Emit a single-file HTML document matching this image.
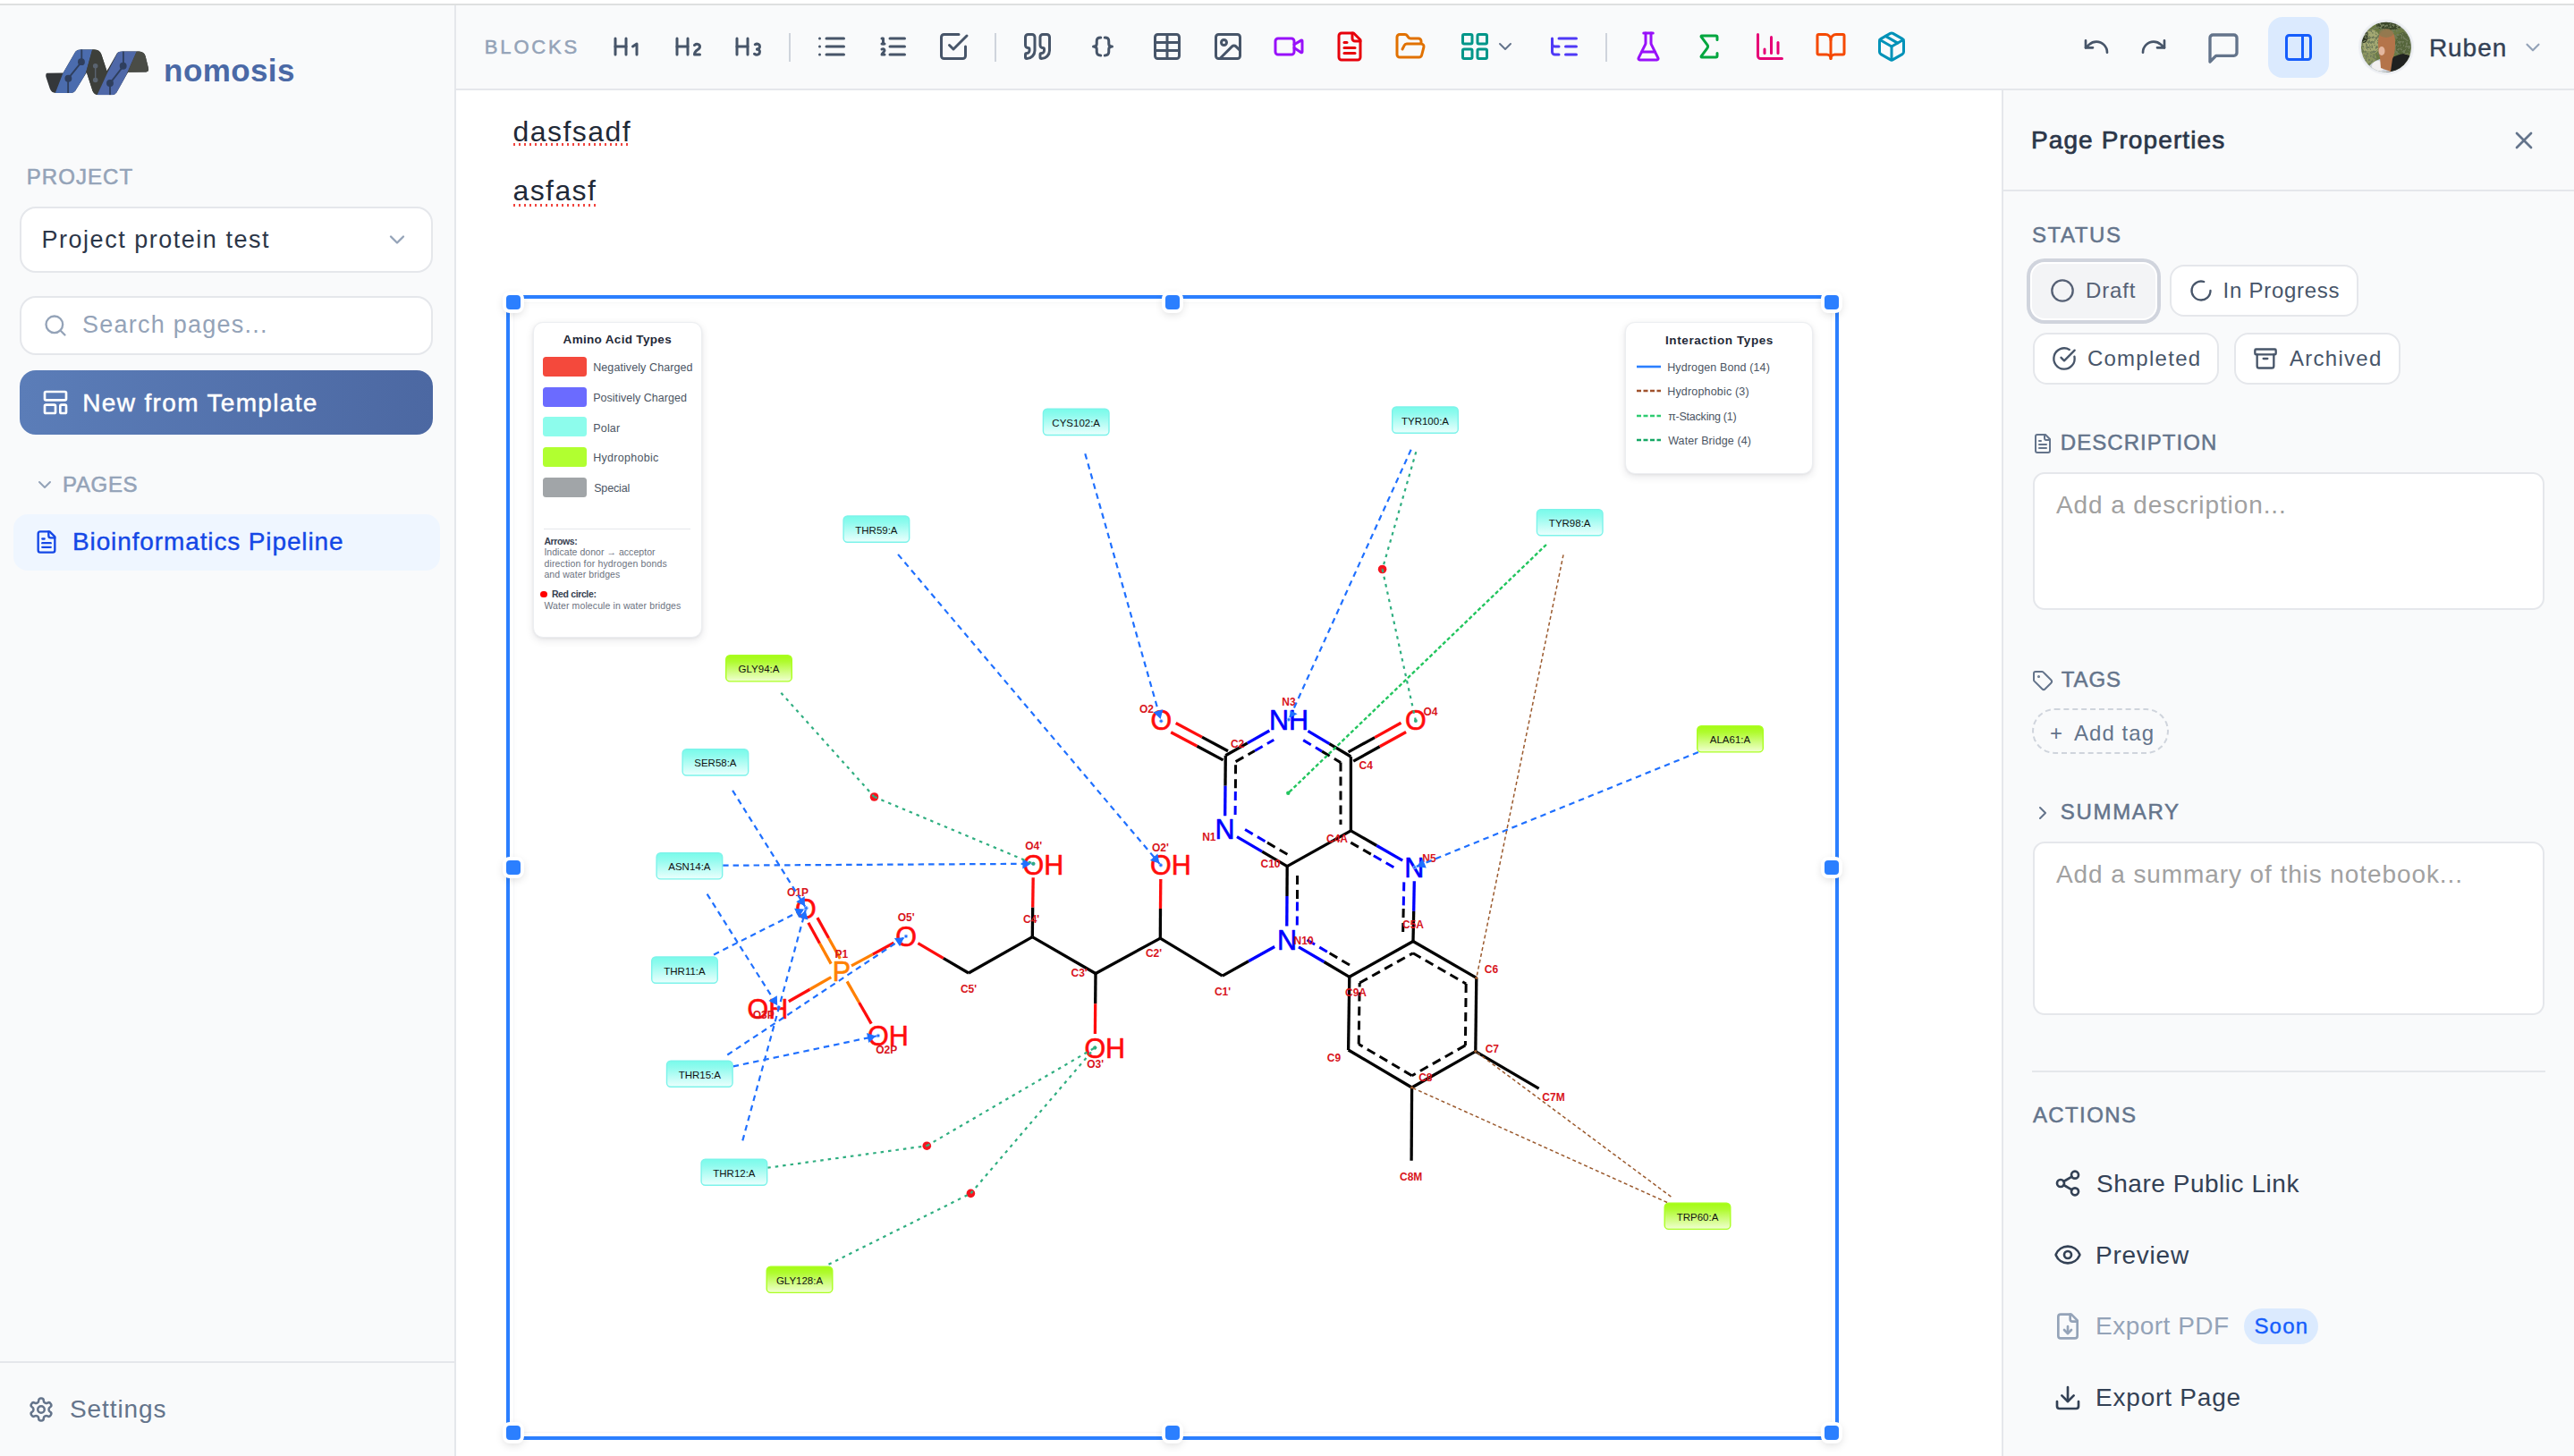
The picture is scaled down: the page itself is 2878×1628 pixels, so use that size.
<!DOCTYPE html>
<html lang="en"><head><meta charset="utf-8"><title>nomosis – Bioinformatics Pipeline</title><style>
*{box-sizing:border-box;margin:0;padding:0}
html,body{width:2878px;height:1628px;overflow:hidden;background:#fff;font-family:'Liberation Sans', sans-serif}
body{position:relative}
.b{position:absolute;display:block}
button.b{border:0;background:none;font:inherit}
.t{position:absolute;white-space:pre;display:block}
.ic{position:absolute;display:block;overflow:visible}
svg text{font-family:'Liberation Sans', sans-serif}
</style></head>
<body>
<div class="b" style="left:0.0px;top:4.0px;width:2878.0px;height:2.0px;background:#dee0e0"></div>
<aside>
<div class="b" style="left:0.0px;top:6.0px;width:510.0px;height:1622.0px;background:#f9fafb;border-right:2px solid #e5e7eb"></div>
<svg class="ic" style="left:40px;top:40px;width:140px;height:80px" viewBox="0 0 1201 686">
<defs><clipPath id="lg"><path d="M108 358 L262 356 L380 152 Q395 130 430 130 L560 130 Q612 132 630 180 L682 338 L778 170 Q792 150 830 150 L990 150 Q1040 152 1052 195 L1082 318 Q1086 345 1060 347 L885 350 L775 545 Q760 568 730 568 L600 568 Q560 566 545 530 L488 352 L378 530 Q365 548 340 548 L190 548 Q150 546 135 505 L97 392 Q92 360 108 358 Z"/></clipPath></defs>
<g clip-path="url(#lg)">
<rect x="80" y="120" width="1020" height="460" fill="#34373a"/>
<polygon points="183,560 262,356 392,125 545,125 482,350 380,560" fill="#4b6cae"/>
<polygon points="545,120 650,120 700,340 585,580 550,580 482,350" fill="#3d3f3a"/>
<polygon points="583,580 690,350 797,140 972,140 880,350 770,580" fill="#4f68a8"/>
<polygon points="972,140 1100,140 1100,360 876,360" fill="#4a4c46"/>
<g stroke="#2f3f5e" stroke-width="16" fill="#2f3f5e" stroke-linecap="round">
<path d="M440 135V250L310 410V545" fill="none"/><circle cx="437" cy="250" r="26"/><circle cx="312" cy="410" r="26"/>
<path d="M840 155V290L712 455V565" fill="none"/><circle cx="838" cy="290" r="26"/><circle cx="712" cy="455" r="26"/>
</g>
<g stroke="#5a6470" stroke-width="12" fill="#5a6470"><path d="M572 290V420" fill="none"/><circle cx="572" cy="290" r="18"/><circle cx="572" cy="425" r="18"/></g>
</g></svg>
<span class="t" style="left:183.1px;top:60.5px;font-size:35px;line-height:35px;color:#4a69a6;font-weight:700;letter-spacing:0.41px;">nomosis</span>
<span class="t" style="left:29.7px;top:185.7px;font-size:24px;line-height:24px;color:#94a3b8;font-weight:400;letter-spacing:1.08px;-webkit-text-stroke:0.55px #94a3b8;">PROJECT</span>
<div class="b" style="left:22.0px;top:231.0px;width:462.0px;height:74.0px;background:#fff;border:2px solid #e5e7eb;border-radius:18px"></div>
<span class="t" style="left:46.5px;top:254.9px;font-size:27px;line-height:27px;color:#2c3648;font-weight:400;letter-spacing:1.52px;">Project protein test</span>
<svg class="ic" style="left:430.0px;top:254.0px;width:28px;height:28px;color:#94a3b8" viewBox="0 0 24 24" fill="none" stroke="currentColor" stroke-width="2" stroke-linecap="round" stroke-linejoin="round"><path d="m6 9 6 6 6-6"/></svg>
<div class="b" style="left:22.0px;top:331.0px;width:462.0px;height:66.0px;background:#fff;border:2px solid #e5e7eb;border-radius:18px"></div>
<svg class="ic" style="left:47.5px;top:349.5px;width:28px;height:28px;color:#94a3b8" viewBox="0 0 24 24" fill="none" stroke="currentColor" stroke-width="2" stroke-linecap="round" stroke-linejoin="round"><circle cx="11" cy="11" r="8"/><path d="m21 21-4.3-4.3"/></svg>
<span class="t" style="left:92.0px;top:350.1px;font-size:27px;line-height:27px;color:#94a3b8;font-weight:400;letter-spacing:1.24px;">Search pages...</span>
<button class="b" style="left:22.0px;top:414.0px;width:462.0px;height:72.0px;background:linear-gradient(90deg,#5b7db8,#4c68a2);border-radius:18px"></button>
<svg class="ic" style="left:46.0px;top:434.0px;width:32px;height:32px;color:#fff" viewBox="0 0 24 24" fill="none" stroke="currentColor" stroke-width="2" stroke-linecap="round" stroke-linejoin="round"><rect width="18" height="7" x="3" y="3" rx="1"/><rect width="9" height="7" x="3" y="14" rx="1"/><rect width="5" height="7" x="16" y="14" rx="1"/></svg>
<span class="t" style="left:92.3px;top:436.6px;font-size:28px;line-height:28px;color:#fff;font-weight:400;letter-spacing:1.34px;-webkit-text-stroke:0.5px #fff;">New from Template</span>
<svg class="ic" style="left:38.0px;top:530.0px;width:24px;height:24px;color:#94a3b8" viewBox="0 0 24 24" fill="none" stroke="currentColor" stroke-width="2" stroke-linecap="round" stroke-linejoin="round"><path d="m6 9 6 6 6-6"/></svg>
<span class="t" style="left:70.0px;top:529.5px;font-size:24px;line-height:24px;color:#94a3b8;font-weight:400;letter-spacing:0.67px;-webkit-text-stroke:0.55px #94a3b8;">PAGES</span>
<div class="b" style="left:14.5px;top:574.5px;width:477.0px;height:63.0px;background:#eff6ff;border-radius:16px"></div>
<svg class="ic" style="left:38.0px;top:592.3px;width:28px;height:28px;color:#1447e6" viewBox="0 0 24 24" fill="none" stroke="currentColor" stroke-width="2" stroke-linecap="round" stroke-linejoin="round"><path d="M15 2H6a2 2 0 0 0-2 2v16a2 2 0 0 0 2 2h12a2 2 0 0 0 2-2V7Z"/><path d="M14 2v4a2 2 0 0 0 2 2h4"/><path d="M10 9H8"/><path d="M16 13H8"/><path d="M16 17H8"/></svg>
<span class="t" style="left:81.0px;top:592.3px;font-size:28px;line-height:28px;color:#1447e6;font-weight:400;letter-spacing:0.88px;-webkit-text-stroke:0.4px #1447e6;">Bioinformatics Pipeline</span>
<div class="b" style="left:0.0px;top:1521.5px;width:508.0px;height:2.0px;background:#e5e7eb"></div>
<svg class="ic" style="left:30.8px;top:1561.0px;width:30px;height:30px;color:#64748b" viewBox="0 0 24 24" fill="none" stroke="currentColor" stroke-width="2" stroke-linecap="round" stroke-linejoin="round"><path d="M12.22 2h-.44a2 2 0 0 0-2 2v.18a2 2 0 0 1-1 1.73l-.43.25a2 2 0 0 1-2 0l-.15-.08a2 2 0 0 0-2.73.73l-.22.38a2 2 0 0 0 .73 2.73l.15.1a2 2 0 0 1 1 1.72v.51a2 2 0 0 1-1 1.74l-.15.09a2 2 0 0 0-.73 2.73l.22.38a2 2 0 0 0 2.73.73l.15-.08a2 2 0 0 1 2 0l.43.25a2 2 0 0 1 1 1.73V20a2 2 0 0 0 2 2h.44a2 2 0 0 0 2-2v-.18a2 2 0 0 1 1-1.73l.43-.25a2 2 0 0 1 2 0l.15.08a2 2 0 0 0 2.73-.73l.22-.39a2 2 0 0 0-.73-2.73l-.15-.08a2 2 0 0 1-1-1.74v-.5a2 2 0 0 1 1-1.74l.15-.09a2 2 0 0 0 .73-2.73l-.22-.38a2 2 0 0 0-2.73-.73l-.15.08a2 2 0 0 1-2 0l-.43-.25a2 2 0 0 1-1-1.73V4a2 2 0 0 0-2-2z"/><circle cx="12" cy="12" r="3"/></svg>
<span class="t" style="left:78.0px;top:1561.9px;font-size:28px;line-height:28px;color:#64748b;font-weight:400;letter-spacing:0.90px;">Settings</span>
</aside>
<header>
<div class="b" style="left:510.0px;top:6.0px;width:2368.0px;height:95.0px;background:#f9fafb;border-bottom:2px solid #e5e7eb"></div>
<span class="t" style="left:541.8px;top:41.5px;font-size:22px;line-height:22px;color:#94a3b8;font-weight:400;letter-spacing:2.84px;-webkit-text-stroke:0.5px #94a3b8;">BLOCKS</span>
<svg class="ic" style="left:682.4px;top:34.3px;width:36px;height:36px;color:#475569" viewBox="0 0 24 24" fill="none" stroke="currentColor" stroke-width="2" stroke-linecap="round" stroke-linejoin="round"><path d="M4 12h8"/><path d="M4 18V6"/><path d="M12 18V6"/><path d="m17 12 3-2v8"/></svg>
<svg class="ic" style="left:750.5px;top:34.3px;width:36px;height:36px;color:#475569" viewBox="0 0 24 24" fill="none" stroke="currentColor" stroke-width="2" stroke-linecap="round" stroke-linejoin="round"><path d="M4 12h8"/><path d="M4 18V6"/><path d="M12 18V6"/><path d="M21 18h-4c0-4 4-3 4-6 0-1.5-2-2.5-4-1"/></svg>
<svg class="ic" style="left:818.4px;top:34.3px;width:36px;height:36px;color:#475569" viewBox="0 0 24 24" fill="none" stroke="currentColor" stroke-width="2" stroke-linecap="round" stroke-linejoin="round"><path d="M4 12h8"/><path d="M4 18V6"/><path d="M12 18V6"/><path d="M17.5 10.5c1.7-1 3.5 0 3.5 1.5a2 2 0 0 1-2 2"/><path d="M17 17.5c2 1.5 4 .3 4-1.5a2 2 0 0 0-2-2"/></svg>
<svg class="ic" style="left:911.7px;top:34.3px;width:36px;height:36px;color:#475569" viewBox="0 0 24 24" fill="none" stroke="currentColor" stroke-width="2" stroke-linecap="round" stroke-linejoin="round"><path d="M8 6h13"/><path d="M8 12h13"/><path d="M8 18h13"/><path d="M3 6h.01"/><path d="M3 12h.01"/><path d="M3 18h.01"/></svg>
<svg class="ic" style="left:980.2px;top:34.3px;width:36px;height:36px;color:#475569" viewBox="0 0 24 24" fill="none" stroke="currentColor" stroke-width="2" stroke-linecap="round" stroke-linejoin="round"><path d="M10 6h11"/><path d="M10 12h11"/><path d="M10 18h11"/><path d="M4 6h1v4"/><path d="M4 10h2"/><path d="M6 18H4c0-1 2-2 2-3s-1-1.5-2-1"/></svg>
<svg class="ic" style="left:1048.4px;top:34.3px;width:36px;height:36px;color:#475569" viewBox="0 0 24 24" fill="none" stroke="currentColor" stroke-width="2" stroke-linecap="round" stroke-linejoin="round"><path d="m9 11 3 3L22 4"/><path d="M21 12v7a2 2 0 0 1-2 2H5a2 2 0 0 1-2-2V5a2 2 0 0 1 2-2h11"/></svg>
<svg class="ic" style="left:1142.0px;top:34.3px;width:36px;height:36px;color:#475569" viewBox="0 0 24 24" fill="none" stroke="currentColor" stroke-width="2" stroke-linecap="round" stroke-linejoin="round"><path d="M16 3a2 2 0 0 0-2 2v6a2 2 0 0 0 2 2 1 1 0 0 1 1 1v1a2 2 0 0 1-2 2 1 1 0 0 0-1 1v2a1 1 0 0 0 1 1 6 6 0 0 0 6-6V5a2 2 0 0 0-2-2z"/><path d="M5 3a2 2 0 0 0-2 2v6a2 2 0 0 0 2 2 1 1 0 0 1 1 1v1a2 2 0 0 1-2 2 1 1 0 0 0-1 1v2a1 1 0 0 0 1 1 6 6 0 0 0 6-6V5a2 2 0 0 0-2-2z"/></svg>
<svg class="ic" style="left:1215.0px;top:34.3px;width:36px;height:36px;color:#475569" viewBox="0 0 24 24" fill="none" stroke="currentColor" stroke-width="2" stroke-linecap="round" stroke-linejoin="round"><path d="M10.5 5.4C8.5 5.4 7.5 6.4 7.5 8v2c0 1.3-1 2-2.5 2 1.5 0 2.5.7 2.5 2v2c0 1.6 1 2.6 3 2.6"/><path d="M13.5 5.4c2 0 3 1 3 2.6v2c0 1.3 1 2 2.5 2-1.5 0-2.5.7-2.5 2v2c0 1.6-1 2.6-3 2.6"/></svg>
<svg class="ic" style="left:1287.0px;top:34.3px;width:36px;height:36px;color:#475569" viewBox="0 0 24 24" fill="none" stroke="currentColor" stroke-width="2" stroke-linecap="round" stroke-linejoin="round"><path d="M12 3v18"/><rect width="18" height="18" x="3" y="3" rx="2"/><path d="M3 9h18"/><path d="M3 15h18"/></svg>
<svg class="ic" style="left:1355.0px;top:34.3px;width:36px;height:36px;color:#475569" viewBox="0 0 24 24" fill="none" stroke="currentColor" stroke-width="2" stroke-linecap="round" stroke-linejoin="round"><rect width="18" height="18" x="3" y="3" rx="2" ry="2"/><circle cx="9" cy="9" r="2"/><path d="m21 15-3.086-3.086a2 2 0 0 0-2.828 0L6 21"/></svg>
<svg class="ic" style="left:1423.0px;top:34.3px;width:36px;height:36px;color:#9810fa" viewBox="0 0 24 24" fill="none" stroke="currentColor" stroke-width="2" stroke-linecap="round" stroke-linejoin="round"><path d="m16 13 5.223 3.482a.5.5 0 0 0 .777-.416V7.87a.5.5 0 0 0-.752-.432L16 10.5"/><rect x="2" y="6" width="14" height="12" rx="2"/></svg>
<svg class="ic" style="left:1491.0px;top:34.3px;width:36px;height:36px;color:#e7000b" viewBox="0 0 24 24" fill="none" stroke="currentColor" stroke-width="2" stroke-linecap="round" stroke-linejoin="round"><path d="M15 2H6a2 2 0 0 0-2 2v16a2 2 0 0 0 2 2h12a2 2 0 0 0 2-2V7Z"/><path d="M14 2v4a2 2 0 0 0 2 2h4"/><path d="M10 9H8"/><path d="M16 13H8"/><path d="M16 17H8"/></svg>
<svg class="ic" style="left:1559.0px;top:34.3px;width:36px;height:36px;color:#e17100" viewBox="0 0 24 24" fill="none" stroke="currentColor" stroke-width="2" stroke-linecap="round" stroke-linejoin="round"><path d="m6 14 1.5-2.9A2 2 0 0 1 9.24 10H20a2 2 0 0 1 1.94 2.5l-1.54 6a2 2 0 0 1-1.95 1.5H4a2 2 0 0 1-2-2V5a2 2 0 0 1 2-2h3.9a2 2 0 0 1 1.69.9l.81 1.2a2 2 0 0 0 1.67.9H18a2 2 0 0 1 2 2v2"/></svg>
<svg class="ic" style="left:1631.0px;top:34.3px;width:36px;height:36px;color:#009689" viewBox="0 0 24 24" fill="none" stroke="currentColor" stroke-width="2" stroke-linecap="round" stroke-linejoin="round"><rect width="7" height="7" x="3" y="3" rx="1"/><rect width="7" height="7" x="14" y="3" rx="1"/><rect width="7" height="7" x="14" y="14" rx="1"/><rect width="7" height="7" x="3" y="14" rx="1"/></svg>
<svg class="ic" style="left:1731.0px;top:34.3px;width:36px;height:36px;color:#4f39f6" viewBox="0 0 24 24" fill="none" stroke="currentColor" stroke-width="2" stroke-linecap="round" stroke-linejoin="round"><path d="M21 12h-8"/><path d="M21 6H8"/><path d="M21 18h-8"/><path d="M3 6v4c0 1.1.9 2 2 2h3"/><path d="M3 10v6c0 1.1.9 2 2 2h3"/></svg>
<svg class="ic" style="left:1825.0px;top:34.3px;width:36px;height:36px;color:#9810fa" viewBox="0 0 24 24" fill="none" stroke="currentColor" stroke-width="2" stroke-linecap="round" stroke-linejoin="round"><path d="M10 2v7.527a2 2 0 0 1-.211.896L4.72 20.55a1 1 0 0 0 .9 1.45h12.76a1 1 0 0 0 .9-1.45l-5.069-10.127A2 2 0 0 1 14 9.527V2"/><path d="M8.5 2h7"/><path d="M7 16h10"/></svg>
<svg class="ic" style="left:1893.3px;top:34.3px;width:36px;height:36px;color:#00a63e" viewBox="0 0 24 24" fill="none" stroke="currentColor" stroke-width="2" stroke-linecap="round" stroke-linejoin="round"><path d="M18 7V5a1 1 0 0 0-1-1H6.5a.5.5 0 0 0-.4.8l4.5 6a2 2 0 0 1 0 2.4l-4.5 6a.5.5 0 0 0 .4.8H17a1 1 0 0 0 1-1v-2"/></svg>
<svg class="ic" style="left:1961.0px;top:34.3px;width:36px;height:36px;color:#e60076" viewBox="0 0 24 24" fill="none" stroke="currentColor" stroke-width="2" stroke-linecap="round" stroke-linejoin="round"><path d="M3 3v16a2 2 0 0 0 2 2h16"/><path d="M18 17V9"/><path d="M13 17V5"/><path d="M8 17v-3"/></svg>
<svg class="ic" style="left:2029.0px;top:34.3px;width:36px;height:36px;color:#f54900" viewBox="0 0 24 24" fill="none" stroke="currentColor" stroke-width="2" stroke-linecap="round" stroke-linejoin="round"><path d="M12 7v14"/><path d="M3 18a1 1 0 0 1-1-1V4a1 1 0 0 1 1-1h5a4 4 0 0 1 4 4 4 4 0 0 1 4-4h5a1 1 0 0 1 1 1v13a1 1 0 0 1-1 1h-6a3 3 0 0 0-3 3 3 3 0 0 0-3-3z"/></svg>
<svg class="ic" style="left:2097.0px;top:34.3px;width:36px;height:36px;color:#0092b8" viewBox="0 0 24 24" fill="none" stroke="currentColor" stroke-width="2" stroke-linecap="round" stroke-linejoin="round"><path d="m7.5 4.27 9 5.15"/><path d="M21 8a2 2 0 0 0-1-1.73l-7-4a2 2 0 0 0-2 0l-7 4A2 2 0 0 0 3 8v8a2 2 0 0 0 1 1.73l7 4a2 2 0 0 0 2 0l7-4A2 2 0 0 0 21 16Z"/><path d="m3.3 7 8.7 5 8.7-5"/><path d="M12 22V12"/></svg>
<svg class="ic" style="left:2328.0px;top:36.3px;width:32px;height:32px;color:#475569" viewBox="0 0 24 24" fill="none" stroke="currentColor" stroke-width="2" stroke-linecap="round" stroke-linejoin="round"><path d="M3 7v6h6"/><path d="M21 17a9 9 0 0 0-9-9 9 9 0 0 0-6 2.3L3 13"/></svg>
<svg class="ic" style="left:2392.0px;top:36.3px;width:32px;height:32px;color:#475569" viewBox="0 0 24 24" fill="none" stroke="currentColor" stroke-width="2" stroke-linecap="round" stroke-linejoin="round"><path d="M21 7v6h-6"/><path d="M3 17a9 9 0 0 1 9-9 9 9 0 0 1 6 2.3l3 2.7"/></svg>
<svg class="ic" style="left:1671.0px;top:40.3px;width:24px;height:24px;color:#64748b" viewBox="0 0 24 24" fill="none" stroke="currentColor" stroke-width="2" stroke-linecap="round" stroke-linejoin="round"><path d="m6 9 6 6 6-6"/></svg>
<div class="b" style="left:882.0px;top:37.0px;width:2.0px;height:32.0px;background:#cfd4dc"></div>
<div class="b" style="left:1112.0px;top:37.0px;width:2.0px;height:32.0px;background:#cfd4dc"></div>
<div class="b" style="left:1795.0px;top:37.0px;width:2.0px;height:32.0px;background:#cfd4dc"></div>
<svg class="ic" style="left:2465.6px;top:33.5px;width:40px;height:40px;color:#64748b" viewBox="0 0 24 24" fill="none" stroke="currentColor" stroke-width="2" stroke-linecap="round" stroke-linejoin="round"><path d="M21 15a2 2 0 0 1-2 2H7l-4 4V5a2 2 0 0 1 2-2h14a2 2 0 0 1 2 2z"/></svg>
<div class="b" style="left:2536.0px;top:19.0px;width:68.0px;height:68.0px;background:#dbeafe;border-radius:16px"></div>
<svg class="ic" style="left:2552.0px;top:35.0px;width:36px;height:36px;color:#155dfc" viewBox="0 0 24 24" fill="none" stroke="currentColor" stroke-width="2" stroke-linecap="round" stroke-linejoin="round"><rect width="18" height="18" x="3" y="3" rx="2"/><path d="M15 3v18"/></svg>
<svg class="ic" style="left:2635px;top:20px;width:66px;height:66px" viewBox="0 0 66 66">
<defs><clipPath id="av"><circle cx="33" cy="32.7" r="28"/></clipPath>
<filter id="nz" x="0" y="0" width="1" height="1"><feTurbulence type="fractalNoise" baseFrequency=".38" numOctaves="2" seed="7" result="t"/><feColorMatrix in="t" type="matrix" values="0 0 0 0 .16  0 0 0 0 .2  0 0 0 0 .1  0 0 0 -9 4.6" result="d"/><feComposite in="d" in2="SourceGraphic" operator="in" result="dd"/><feMerge><feMergeNode in="SourceGraphic"/><feMergeNode in="dd"/></feMerge></filter></defs>
<circle cx="33" cy="32.7" r="31" fill="#eef0f4"/><circle cx="33" cy="32.7" r="29.3" fill="#e6e9ee"/>
<g clip-path="url(#av)"><g filter="url(#nz)"><rect width="66" height="66" fill="#6a7a42"/>
<ellipse cx="16" cy="27" rx="11" ry="14" fill="#a3a872"/><ellipse cx="13" cy="44" rx="9" ry="7" fill="#8c9560"/><ellipse cx="36" cy="8" rx="14" ry="6" fill="#3b472a"/><ellipse cx="52" cy="30" rx="9" ry="14" fill="#55653a"/><ellipse cx="54" cy="46" rx="6" ry="6" fill="#9ea56a"/><ellipse cx="8" cy="20" rx="5" ry="8" fill="#2d3524"/></g>
<path d="M33 66 L33 50 Q40 42 52 40 L66 44 L66 66Z" fill="#1f2120"/>
<path d="M8 66 Q12 50 26 46 L36 52 L38 66Z" fill="#cfd4dc"/><ellipse cx="24" cy="54" rx="7" ry="6" fill="#f3f0f0"/>
<path d="M24 30 Q23 14 34 13 Q44 14 43 30 Q43 40 40 46 L38 60 L27 56 L26 44 Q24 38 24 30Z" fill="#b4744a"/>
<ellipse cx="28" cy="37" rx="3.5" ry="5" fill="#f0c8b4" opacity=".8"/><ellipse cx="33" cy="17" rx="8" ry="5" fill="#8c7a50" opacity=".8"/>
</g></svg>
<span class="t" style="left:2715.9px;top:39.5px;font-size:28px;line-height:28px;color:#334155;font-weight:400;letter-spacing:0.97px;-webkit-text-stroke:0.4px #334155;">Ruben</span>
<svg class="ic" style="left:2819.0px;top:40.0px;width:26px;height:26px;color:#94a3b8" viewBox="0 0 24 24" fill="none" stroke="currentColor" stroke-width="2" stroke-linecap="round" stroke-linejoin="round"><path d="m6 9 6 6 6-6"/></svg>
</header>
<main>
<div class="b" style="left:510.0px;top:101.0px;width:1728.0px;height:1527.0px;background:#fff"></div>
<p class="t" style="left:573.5px;top:130.6px;font-size:32px;line-height:32px;color:#1f2937;font-weight:400;letter-spacing:1.47px;">dasfsadf</p>
<div class="b" style="left:574.0px;top:160.0px;width:131.0px;height:3.0px;background:repeating-linear-gradient(90deg,#f0443e 0 2.5px,transparent 2.5px 6px)"></div>
<p class="t" style="left:573.5px;top:196.8px;font-size:32px;line-height:32px;color:#1f2937;font-weight:400;letter-spacing:1.40px;">asfasf</p>
<div class="b" style="left:574.0px;top:228.0px;width:92.0px;height:3.0px;background:repeating-linear-gradient(90deg,#f0443e 0 2.5px,transparent 2.5px 6px)"></div>
</main>
<aside>
<div class="b" style="left:2238.0px;top:101.0px;width:640.0px;height:1527.0px;background:#f9fafb;border-left:2px solid #e5e7eb"></div>
<h2 class="t" style="left:2271.0px;top:143.3px;font-size:28px;line-height:28px;color:#2b3648;font-weight:400;letter-spacing:1.10px;-webkit-text-stroke:0.7px #2b3648;">Page Properties</h2>
<svg class="ic" style="left:2806.0px;top:141.0px;width:32px;height:32px;color:#64748b" viewBox="0 0 24 24" fill="none" stroke="currentColor" stroke-width="2" stroke-linecap="round" stroke-linejoin="round"><path d="M18 6 6 18"/><path d="m6 6 12 12"/></svg>
<div class="b" style="left:2240.0px;top:212.0px;width:638.0px;height:2.0px;background:#e5e7eb"></div>
<span class="t" style="left:2272.0px;top:250.6px;font-size:24px;line-height:24px;color:#64748b;font-weight:400;letter-spacing:1.58px;-webkit-text-stroke:0.5px #64748b;">STATUS</span>
<button class="b" style="left:2272.0px;top:294.5px;width:137.5px;height:61.0px;background:#f3f4f6;border-radius:14px;box-shadow:0 0 0 2px #fff,0 0 0 6px #d0d4dd"></button>
<svg class="ic" style="left:2292.2px;top:310.8px;width:28px;height:28px;color:#566175" viewBox="0 0 24 24" fill="none" stroke="currentColor" stroke-width="2" stroke-linecap="round" stroke-linejoin="round"><circle cx="12" cy="12" r="10"/></svg>
<span class="t" style="left:2332.0px;top:313.0px;font-size:24px;line-height:24px;color:#566175;font-weight:400;letter-spacing:0.87px;">Draft</span>
<button class="b" style="left:2426.0px;top:296.0px;width:211.0px;height:58.0px;background:#fff;border:2px solid #e5e7eb;border-radius:16px"></button>
<svg class="ic" style="left:2446.8px;top:310.8px;width:28px;height:28px;color:#475569" viewBox="0 0 24 24" fill="none" stroke="currentColor" stroke-width="2" stroke-linecap="round" stroke-linejoin="round"><path d="M21 12a9 9 0 1 1-6.219-8.56"/></svg>
<span class="t" style="left:2485.6px;top:313.0px;font-size:24px;line-height:24px;color:#475569;font-weight:400;letter-spacing:0.72px;">In Progress</span>
<button class="b" style="left:2273.0px;top:372.0px;width:207.5px;height:58.0px;background:#fff;border:2px solid #e5e7eb;border-radius:16px"></button>
<svg class="ic" style="left:2293.8px;top:387.0px;width:28px;height:28px;color:#475569" viewBox="0 0 24 24" fill="none" stroke="currentColor" stroke-width="2" stroke-linecap="round" stroke-linejoin="round"><path d="M21.801 10A10 10 0 1 1 17 3.335"/><path d="m9 11 3 3L22 4"/></svg>
<span class="t" style="left:2333.9px;top:388.7px;font-size:24px;line-height:24px;color:#475569;font-weight:400;letter-spacing:1.27px;">Completed</span>
<button class="b" style="left:2498.0px;top:372.0px;width:185.5px;height:58.0px;background:#fff;border:2px solid #e5e7eb;border-radius:16px"></button>
<svg class="ic" style="left:2519.0px;top:387.0px;width:28px;height:28px;color:#475569" viewBox="0 0 24 24" fill="none" stroke="currentColor" stroke-width="2" stroke-linecap="round" stroke-linejoin="round"><rect width="20" height="5" x="2" y="3" rx="1"/><path d="M4 8v11a2 2 0 0 0 2 2h12a2 2 0 0 0 2-2V8"/><path d="M10 12h4"/></svg>
<span class="t" style="left:2560.0px;top:388.7px;font-size:24px;line-height:24px;color:#475569;font-weight:400;letter-spacing:1.28px;">Archived</span>
<svg class="ic" style="left:2272.0px;top:484.0px;width:24px;height:24px;color:#64748b" viewBox="0 0 24 24" fill="none" stroke="currentColor" stroke-width="2" stroke-linecap="round" stroke-linejoin="round"><path d="M15 2H6a2 2 0 0 0-2 2v16a2 2 0 0 0 2 2h12a2 2 0 0 0 2-2V7Z"/><path d="M14 2v4a2 2 0 0 0 2 2h4"/><path d="M10 9H8"/><path d="M16 13H8"/><path d="M16 17H8"/></svg>
<span class="t" style="left:2303.8px;top:482.7px;font-size:24px;line-height:24px;color:#64748b;font-weight:400;letter-spacing:1.05px;-webkit-text-stroke:0.5px #64748b;">DESCRIPTION</span>
<div class="b" style="left:2273.0px;top:528.0px;width:572.0px;height:154.0px;background:#fff;border:2px solid #e5e7eb;border-radius:13px"></div>
<span class="t" style="left:2299.0px;top:551.2px;font-size:28px;line-height:28px;color:#a1a1a1;font-weight:400;letter-spacing:0.90px;">Add a description...</span>
<svg class="ic" style="left:2272.2px;top:748.5px;width:24px;height:24px;color:#64748b" viewBox="0 0 24 24" fill="none" stroke="currentColor" stroke-width="2" stroke-linecap="round" stroke-linejoin="round"><path d="M12.586 2.586A2 2 0 0 0 11.172 2H4a2 2 0 0 0-2 2v7.172a2 2 0 0 0 .586 1.414l8.704 8.704a2.426 2.426 0 0 0 3.42 0l6.58-6.58a2.426 2.426 0 0 0 0-3.42z"/><circle cx="7.5" cy="7.5" r=".5" fill="currentColor"/></svg>
<span class="t" style="left:2304.8px;top:747.7px;font-size:24px;line-height:24px;color:#64748b;font-weight:400;letter-spacing:0.88px;-webkit-text-stroke:0.5px #64748b;">TAGS</span>
<button class="b" style="left:2272.0px;top:792.0px;width:152.5px;height:50.5px;border:2px dashed #cfd4dc;border-radius:26px"></button>
<span class="t" style="left:2292.0px;top:807.7px;font-size:24px;line-height:24px;color:#64748b;font-weight:400;">+</span>
<span class="t" style="left:2319.0px;top:808.0px;font-size:24px;line-height:24px;color:#64748b;font-weight:400;letter-spacing:1.04px;">Add tag</span>
<svg class="ic" style="left:2272.0px;top:897.0px;width:24px;height:24px;color:#64748b" viewBox="0 0 24 24" fill="none" stroke="currentColor" stroke-width="2" stroke-linecap="round" stroke-linejoin="round"><path d="m9 18 6-6-6-6"/></svg>
<span class="t" style="left:2303.8px;top:895.8px;font-size:24px;line-height:24px;color:#64748b;font-weight:400;letter-spacing:1.68px;-webkit-text-stroke:0.5px #64748b;">SUMMARY</span>
<div class="b" style="left:2273.0px;top:941.0px;width:572.0px;height:194.0px;background:#fff;border:2px solid #e5e7eb;border-radius:13px"></div>
<span class="t" style="left:2299.0px;top:964.3px;font-size:28px;line-height:28px;color:#a1a1a1;font-weight:400;letter-spacing:0.91px;">Add a summary of this notebook...</span>
<div class="b" style="left:2272.0px;top:1197.0px;width:574.0px;height:2.0px;background:#e5e7eb"></div>
<span class="t" style="left:2272.9px;top:1234.7px;font-size:24px;line-height:24px;color:#64748b;font-weight:400;letter-spacing:1.41px;-webkit-text-stroke:0.5px #64748b;">ACTIONS</span>
<svg class="ic" style="left:2296.0px;top:1307.0px;width:32px;height:32px;color:#334155" viewBox="0 0 24 24" fill="none" stroke="currentColor" stroke-width="2" stroke-linecap="round" stroke-linejoin="round"><circle cx="18" cy="5" r="3"/><circle cx="6" cy="12" r="3"/><circle cx="18" cy="19" r="3"/><path d="M8.59 13.51l6.83 3.98"/><path d="M15.41 6.51l-6.82 3.98"/></svg>
<span class="t" style="left:2344.0px;top:1310.1px;font-size:28px;line-height:28px;color:#334155;font-weight:400;letter-spacing:0.53px;">Share Public Link</span>
<svg class="ic" style="left:2296.0px;top:1387.0px;width:32px;height:32px;color:#334155" viewBox="0 0 24 24" fill="none" stroke="currentColor" stroke-width="2" stroke-linecap="round" stroke-linejoin="round"><path d="M2.062 12.348a1 1 0 0 1 0-.696 10.75 10.75 0 0 1 19.876 0 1 1 0 0 1 0 .696 10.75 10.75 0 0 1-19.876 0"/><circle cx="12" cy="12" r="3"/></svg>
<span class="t" style="left:2343.0px;top:1390.0px;font-size:28px;line-height:28px;color:#334155;font-weight:400;letter-spacing:0.76px;">Preview</span>
<svg class="ic" style="left:2296.0px;top:1467.0px;width:32px;height:32px;color:#94a3b8" viewBox="0 0 24 24" fill="none" stroke="currentColor" stroke-width="2" stroke-linecap="round" stroke-linejoin="round"><path d="M15 2H6a2 2 0 0 0-2 2v16a2 2 0 0 0 2 2h12a2 2 0 0 0 2-2V7Z"/><path d="M14 2v4a2 2 0 0 0 2 2h4"/><path d="M12 18v-6"/><path d="m9 15 3 3 3-3"/></svg>
<span class="t" style="left:2343.0px;top:1469.4px;font-size:28px;line-height:28px;color:#94a3b8;font-weight:400;letter-spacing:0.49px;">Export PDF</span>
<div class="b" style="left:2509.0px;top:1463.0px;width:83.0px;height:40.0px;background:#dbeafe;border-radius:20px"></div>
<span class="t" style="left:2520.4px;top:1470.7px;font-size:24px;line-height:24px;color:#155dfc;font-weight:400;letter-spacing:1.20px;-webkit-text-stroke:0.4px #155dfc;">Soon</span>
<svg class="ic" style="left:2296.0px;top:1547.0px;width:32px;height:32px;color:#334155" viewBox="0 0 24 24" fill="none" stroke="currentColor" stroke-width="2" stroke-linecap="round" stroke-linejoin="round"><path d="M21 15v4a2 2 0 0 1-2 2H5a2 2 0 0 1-2-2v-4"/><path d="M7 10l5 5 5-5"/><path d="M12 15V3"/></svg>
<span class="t" style="left:2343.0px;top:1549.1px;font-size:28px;line-height:28px;color:#334155;font-weight:400;letter-spacing:0.81px;">Export Page</span>
</aside>
<figure>
<div class="b" style="left:566.0px;top:330.0px;width:1490.0px;height:1280.0px;border:4px solid #2b7fff;background:#fff"></div>
<div class="b" style="left:574.0px;top:338.0px;width:1474.0px;height:1264.0px;border:1px solid #f7f8f9;box-shadow:inset 0 2px 6px rgba(0,0,0,.02)"></div>
<svg class="ic" style="left:570px;top:334px;width:1482px;height:1271px" viewBox="570 334 1482 1271"><g stroke-linecap="butt">
<line x1="1370.3" y1="844.8" x2="1394.8" y2="830.9" stroke="#000" stroke-width="3.3" stroke-linecap="butt"/>
<line x1="1394.8" y1="830.9" x2="1419.3" y2="817.0" stroke="#0000ff" stroke-width="3.3" stroke-linecap="butt"/>
<line x1="1462.5" y1="817.4" x2="1486.4" y2="831.7" stroke="#0000ff" stroke-width="3.3" stroke-linecap="butt"/>
<line x1="1486.4" y1="831.7" x2="1510.4" y2="846.0" stroke="#000" stroke-width="3.3" stroke-linecap="butt"/>
<line x1="1510.4" y1="846.0" x2="1510.4" y2="928.9" stroke="#000" stroke-width="3.3" stroke-linecap="butt"/>
<line x1="1510.4" y1="928.9" x2="1439.2" y2="968.6" stroke="#000" stroke-width="3.3" stroke-linecap="butt"/>
<line x1="1439.2" y1="968.6" x2="1411.1" y2="952.1" stroke="#000" stroke-width="3.3" stroke-linecap="butt"/>
<line x1="1411.1" y1="952.1" x2="1383.0" y2="935.6" stroke="#0000ff" stroke-width="3.3" stroke-linecap="butt"/>
<line x1="1369.7" y1="912.2" x2="1370.0" y2="878.5" stroke="#0000ff" stroke-width="3.3" stroke-linecap="butt"/>
<line x1="1370.0" y1="878.5" x2="1370.3" y2="844.8" stroke="#000" stroke-width="3.3" stroke-linecap="butt"/>
<line x1="1510.4" y1="928.9" x2="1539.3" y2="945.5" stroke="#000" stroke-width="3.3" stroke-linecap="butt"/>
<line x1="1539.3" y1="945.5" x2="1568.2" y2="962.1" stroke="#0000ff" stroke-width="3.3" stroke-linecap="butt"/>
<line x1="1581.3" y1="985.3" x2="1580.7" y2="1018.9" stroke="#0000ff" stroke-width="3.3" stroke-linecap="butt"/>
<line x1="1580.7" y1="1018.9" x2="1580.0" y2="1052.5" stroke="#000" stroke-width="3.3" stroke-linecap="butt"/>
<line x1="1580.0" y1="1052.5" x2="1508.8" y2="1092.3" stroke="#000" stroke-width="3.3" stroke-linecap="butt"/>
<line x1="1508.8" y1="1092.3" x2="1480.4" y2="1075.5" stroke="#000" stroke-width="3.3" stroke-linecap="butt"/>
<line x1="1480.4" y1="1075.5" x2="1452.0" y2="1058.8" stroke="#0000ff" stroke-width="3.3" stroke-linecap="butt"/>
<line x1="1438.8" y1="1035.4" x2="1439.0" y2="1002.0" stroke="#0000ff" stroke-width="3.3" stroke-linecap="butt"/>
<line x1="1439.0" y1="1002.0" x2="1439.2" y2="968.6" stroke="#000" stroke-width="3.3" stroke-linecap="butt"/>
<line x1="1580.0" y1="1052.5" x2="1650.8" y2="1093.4" stroke="#000" stroke-width="3.3" stroke-linecap="butt"/>
<line x1="1650.8" y1="1093.4" x2="1649.8" y2="1175.6" stroke="#000" stroke-width="3.3" stroke-linecap="butt"/>
<line x1="1649.8" y1="1175.6" x2="1578.6" y2="1216.0" stroke="#000" stroke-width="3.3" stroke-linecap="butt"/>
<line x1="1578.6" y1="1216.0" x2="1507.6" y2="1174.0" stroke="#000" stroke-width="3.3" stroke-linecap="butt"/>
<line x1="1507.6" y1="1174.0" x2="1508.8" y2="1092.3" stroke="#000" stroke-width="3.3" stroke-linecap="butt"/>
<line x1="1649.8" y1="1175.6" x2="1720.6" y2="1217.2" stroke="#000" stroke-width="3.3" stroke-linecap="butt"/>
<line x1="1578.6" y1="1216.0" x2="1578.1" y2="1297.8" stroke="#000" stroke-width="3.3" stroke-linecap="butt"/>
<line x1="1425.2" y1="1058.5" x2="1396.0" y2="1074.8" stroke="#0000ff" stroke-width="3.3" stroke-linecap="butt"/>
<line x1="1396.0" y1="1074.8" x2="1366.8" y2="1091.1" stroke="#000" stroke-width="3.3" stroke-linecap="butt"/>
<line x1="1366.8" y1="1091.1" x2="1297.3" y2="1049.1" stroke="#000" stroke-width="3.3" stroke-linecap="butt"/>
<line x1="1297.3" y1="1049.1" x2="1297.5" y2="1016.0" stroke="#000" stroke-width="3.3" stroke-linecap="butt"/>
<line x1="1297.5" y1="1016.0" x2="1297.8" y2="982.9" stroke="#ff0d0d" stroke-width="3.3" stroke-linecap="butt"/>
<line x1="1297.3" y1="1049.1" x2="1225.0" y2="1088.5" stroke="#000" stroke-width="3.3" stroke-linecap="butt"/>
<line x1="1225.0" y1="1088.5" x2="1224.7" y2="1122.2" stroke="#000" stroke-width="3.3" stroke-linecap="butt"/>
<line x1="1224.7" y1="1122.2" x2="1224.4" y2="1155.9" stroke="#ff0d0d" stroke-width="3.3" stroke-linecap="butt"/>
<line x1="1225.0" y1="1088.5" x2="1154.3" y2="1047.6" stroke="#000" stroke-width="3.3" stroke-linecap="butt"/>
<line x1="1154.3" y1="1047.6" x2="1154.7" y2="1014.4" stroke="#000" stroke-width="3.3" stroke-linecap="butt"/>
<line x1="1154.7" y1="1014.4" x2="1155.2" y2="981.3" stroke="#ff0d0d" stroke-width="3.3" stroke-linecap="butt"/>
<line x1="1154.3" y1="1047.6" x2="1083.0" y2="1088.0" stroke="#000" stroke-width="3.3" stroke-linecap="butt"/>
<line x1="1083.0" y1="1088.0" x2="1054.7" y2="1071.4" stroke="#000" stroke-width="3.3" stroke-linecap="butt"/>
<line x1="1054.7" y1="1071.4" x2="1026.4" y2="1054.7" stroke="#ff0d0d" stroke-width="3.3" stroke-linecap="butt"/>
<line x1="999.4" y1="1054.3" x2="975.7" y2="1067.1" stroke="#ff0d0d" stroke-width="3.3" stroke-linecap="butt"/>
<line x1="975.7" y1="1067.1" x2="952.0" y2="1079.9" stroke="#ff8000" stroke-width="3.3" stroke-linecap="butt"/>
<line x1="929.3" y1="1092.6" x2="905.5" y2="1106.2" stroke="#ff8000" stroke-width="3.3" stroke-linecap="butt"/>
<line x1="905.5" y1="1106.2" x2="881.8" y2="1119.8" stroke="#ff0d0d" stroke-width="3.3" stroke-linecap="butt"/>
<line x1="947.1" y1="1097.4" x2="960.6" y2="1121.0" stroke="#ff8000" stroke-width="3.3" stroke-linecap="butt"/>
<line x1="960.6" y1="1121.0" x2="974.2" y2="1144.6" stroke="#ff0d0d" stroke-width="3.3" stroke-linecap="butt"/>
<line x1="1373.0" y1="839.7" x2="1343.9" y2="824.1" stroke="#000" stroke-width="3.3" stroke-linecap="butt"/>
<line x1="1343.9" y1="824.1" x2="1314.7" y2="808.5" stroke="#ff0d0d" stroke-width="3.3" stroke-linecap="butt"/>
<line x1="1367.6" y1="849.9" x2="1338.4" y2="834.3" stroke="#000" stroke-width="3.3" stroke-linecap="butt"/>
<line x1="1338.4" y1="834.3" x2="1309.2" y2="818.7" stroke="#ff0d0d" stroke-width="3.3" stroke-linecap="butt"/>
<line x1="1513.2" y1="851.1" x2="1542.7" y2="834.8" stroke="#000" stroke-width="3.3" stroke-linecap="butt"/>
<line x1="1542.7" y1="834.8" x2="1572.1" y2="818.5" stroke="#ff0d0d" stroke-width="3.3" stroke-linecap="butt"/>
<line x1="1507.6" y1="840.9" x2="1537.1" y2="824.6" stroke="#000" stroke-width="3.3" stroke-linecap="butt"/>
<line x1="1537.1" y1="824.6" x2="1566.5" y2="808.3" stroke="#ff0d0d" stroke-width="3.3" stroke-linecap="butt"/>
<line x1="939.4" y1="1071.9" x2="926.6" y2="1049.0" stroke="#ff8000" stroke-width="3.3" stroke-linecap="butt"/>
<line x1="926.6" y1="1049.0" x2="913.9" y2="1026.1" stroke="#ff0d0d" stroke-width="3.3" stroke-linecap="butt"/>
<line x1="929.2" y1="1077.6" x2="916.5" y2="1054.7" stroke="#ff8000" stroke-width="3.3" stroke-linecap="butt"/>
<line x1="916.5" y1="1054.7" x2="903.8" y2="1031.8" stroke="#ff0d0d" stroke-width="3.3" stroke-linecap="butt"/>
<line x1="1381.6" y1="851.6" x2="1403.0" y2="839.5" stroke="#000" stroke-width="3" stroke-linecap="butt" stroke-dasharray="10 6"/>
<line x1="1403.0" y1="839.5" x2="1424.3" y2="827.3" stroke="#0000ff" stroke-width="3" stroke-linecap="butt" stroke-dasharray="10 6"/>
<line x1="1457.2" y1="827.6" x2="1478.1" y2="840.1" stroke="#0000ff" stroke-width="3" stroke-linecap="butt" stroke-dasharray="10 6"/>
<line x1="1478.1" y1="840.1" x2="1499.0" y2="852.6" stroke="#000" stroke-width="3" stroke-linecap="butt" stroke-dasharray="10 6"/>
<line x1="1499.0" y1="852.6" x2="1499.0" y2="922.1" stroke="#000" stroke-width="3" stroke-linecap="butt" stroke-dasharray="10 6"/>
<line x1="1439.4" y1="955.3" x2="1414.5" y2="940.7" stroke="#000" stroke-width="3" stroke-linecap="butt" stroke-dasharray="10 6"/>
<line x1="1414.5" y1="940.7" x2="1389.7" y2="926.1" stroke="#0000ff" stroke-width="3" stroke-linecap="butt" stroke-dasharray="10 6"/>
<line x1="1381.1" y1="911.1" x2="1381.4" y2="881.3" stroke="#0000ff" stroke-width="3" stroke-linecap="butt" stroke-dasharray="10 6"/>
<line x1="1381.4" y1="881.3" x2="1381.6" y2="851.6" stroke="#000" stroke-width="3" stroke-linecap="butt" stroke-dasharray="10 6"/>
<line x1="1510.3" y1="942.1" x2="1535.8" y2="956.8" stroke="#000" stroke-width="3" stroke-linecap="butt" stroke-dasharray="10 6"/>
<line x1="1535.8" y1="956.8" x2="1561.3" y2="971.4" stroke="#0000ff" stroke-width="3" stroke-linecap="butt" stroke-dasharray="10 6"/>
<line x1="1569.8" y1="986.4" x2="1569.2" y2="1016.0" stroke="#0000ff" stroke-width="3" stroke-linecap="butt" stroke-dasharray="10 6"/>
<line x1="1569.2" y1="1016.0" x2="1568.6" y2="1045.7" stroke="#000" stroke-width="3" stroke-linecap="butt" stroke-dasharray="10 6"/>
<line x1="1509.0" y1="1079.0" x2="1483.9" y2="1064.2" stroke="#000" stroke-width="3" stroke-linecap="butt" stroke-dasharray="10 6"/>
<line x1="1483.9" y1="1064.2" x2="1458.8" y2="1049.4" stroke="#0000ff" stroke-width="3" stroke-linecap="butt" stroke-dasharray="10 6"/>
<line x1="1450.3" y1="1034.4" x2="1450.5" y2="1004.9" stroke="#0000ff" stroke-width="3" stroke-linecap="butt" stroke-dasharray="10 6"/>
<line x1="1450.5" y1="1004.9" x2="1450.6" y2="975.4" stroke="#000" stroke-width="3" stroke-linecap="butt" stroke-dasharray="10 6"/>
<line x1="1579.9" y1="1065.7" x2="1639.2" y2="1100.0" stroke="#000" stroke-width="3" stroke-linecap="butt" stroke-dasharray="10 6"/>
<line x1="1639.2" y1="1100.0" x2="1638.4" y2="1168.9" stroke="#000" stroke-width="3" stroke-linecap="butt" stroke-dasharray="10 6"/>
<line x1="1638.4" y1="1168.9" x2="1578.7" y2="1202.7" stroke="#000" stroke-width="3" stroke-linecap="butt" stroke-dasharray="10 6"/>
<line x1="1578.7" y1="1202.7" x2="1519.2" y2="1167.5" stroke="#000" stroke-width="3" stroke-linecap="butt" stroke-dasharray="10 6"/>
<line x1="1519.2" y1="1167.5" x2="1520.2" y2="1099.0" stroke="#000" stroke-width="3" stroke-linecap="butt" stroke-dasharray="10 6"/>
<line x1="1520.2" y1="1099.0" x2="1579.9" y2="1065.7" stroke="#000" stroke-width="3" stroke-linecap="butt" stroke-dasharray="10 6"/>
</g>
<text x="1298.3" y="815.8" font-size="30.5" fill="#ff0d0d" stroke="#ff0d0d" stroke-width="0.6" stroke-linejoin="round" text-anchor="middle">O</text>
<text x="1441.0" y="815.6" font-size="30.5" fill="#0000ff" stroke="#0000ff" stroke-width="0.6" stroke-linejoin="round" text-anchor="middle">NH</text>
<text x="1582.9" y="816.3" font-size="30.5" fill="#ff0d0d" stroke="#ff0d0d" stroke-width="0.6" stroke-linejoin="round" text-anchor="middle">O</text>
<text x="1369.5" y="938.2" font-size="30.5" fill="#0000ff" stroke="#0000ff" stroke-width="0.6" stroke-linejoin="round" text-anchor="middle">N</text>
<text x="1581.3" y="981.4" font-size="30.5" fill="#0000ff" stroke="#0000ff" stroke-width="0.6" stroke-linejoin="round" text-anchor="middle">N</text>
<text x="1438.9" y="1061.9" font-size="30.5" fill="#0000ff" stroke="#0000ff" stroke-width="0.6" stroke-linejoin="round" text-anchor="middle">N</text>
<text x="941.0" y="1096.6" font-size="30.5" fill="#ff8000" stroke="#ff8000" stroke-width="0.6" stroke-linejoin="round" text-anchor="middle">P</text>
<text x="1013.0" y="1058.0" font-size="30.5" fill="#ff0d0d" stroke="#ff0d0d" stroke-width="0.6" stroke-linejoin="round" text-anchor="middle">O</text>
<text x="900.9" y="1026.5" font-size="30.5" fill="#ff0d0d" stroke="#ff0d0d" stroke-width="0.6" stroke-linejoin="round" text-anchor="middle">O</text>
<text x="1286.0" y="978.4" font-size="30.5" fill="#ff0d0d" stroke="#ff0d0d" stroke-width="0.6" stroke-linejoin="round" text-anchor="start">OH</text>
<text x="1143.5" y="977.7" font-size="30.5" fill="#ff0d0d" stroke="#ff0d0d" stroke-width="0.6" stroke-linejoin="round" text-anchor="start">OH</text>
<text x="1212.4" y="1183.0" font-size="30.5" fill="#ff0d0d" stroke="#ff0d0d" stroke-width="0.6" stroke-linejoin="round" text-anchor="start">OH</text>
<text x="970.0" y="1169.4" font-size="30.5" fill="#ff0d0d" stroke="#ff0d0d" stroke-width="0.6" stroke-linejoin="round" text-anchor="start">OH</text>
<text x="835.5" y="1138.6" font-size="30.5" fill="#ff0d0d" stroke="#ff0d0d" stroke-width="0.6" stroke-linejoin="round" text-anchor="start">OH</text>
<g font-size="12" font-weight="700" fill="#d8151c" text-anchor="middle">
<text x="1282.0" y="796.9">O2</text>
<text x="1441.0" y="788.7">N3</text>
<text x="1599.4" y="800.0">O4</text>
<text x="1383.6" y="835.5">C2</text>
<text x="1527.2" y="860.0">C4</text>
<text x="1351.8" y="940.1">N1</text>
<text x="1495.0" y="942.2">C4A</text>
<text x="1420.5" y="969.8">C10</text>
<text x="1598.0" y="963.9">N5</text>
<text x="1297.4" y="951.5">O2&#x27;</text>
<text x="1580.0" y="1037.5">C5A</text>
<text x="1457.6" y="1056.0">N10</text>
<text x="1290.0" y="1070.0">C2&#x27;</text>
<text x="1367.0" y="1112.8">C1&#x27;</text>
<text x="1516.0" y="1113.7">C9A</text>
<text x="1667.4" y="1087.6">C6</text>
<text x="1668.3" y="1176.8">C7</text>
<text x="1491.5" y="1186.8">C9</text>
<text x="1593.8" y="1208.6">C8</text>
<text x="1737.0" y="1230.5">C7M</text>
<text x="1577.7" y="1320.4">C8M</text>
<text x="892.0" y="1002.0">O1P</text>
<text x="940.8" y="1070.9">P1</text>
<text x="1013.2" y="1030.0">O5&#x27;</text>
<text x="1153.1" y="1032.4">C4&#x27;</text>
<text x="1083.0" y="1110.2">C5&#x27;</text>
<text x="1206.6" y="1092.4">C3&#x27;</text>
<text x="853.7" y="1138.7">O3P</text>
<text x="991.2" y="1177.7">O2P</text>
<text x="1224.6" y="1194.3">O3&#x27;</text>
<text x="1155.7" y="949.9">O4&#x27;</text>
</g>
<line x1="808.1" y1="967.7" x2="1155.4" y2="965.8" stroke="#1f70ff" stroke-width="2.2" stroke-linecap="butt" stroke-dasharray="6.5 5"/>
<polygon points="1152.9,965.8 1143.4,971.5 1143.4,960.3" fill="#1f70ff"/>
<circle cx="1155.4" cy="965.8" r="1.8" fill="#1f70ff" stroke="#9cc0ff" stroke-width=".8"/>
<line x1="819.1" y1="883.8" x2="901.3" y2="1015.4" stroke="#1f70ff" stroke-width="2.2" stroke-linecap="butt" stroke-dasharray="6.5 5"/>
<polygon points="900.0,1013.3 890.2,1008.2 899.7,1002.3" fill="#1f70ff"/>
<circle cx="901.3" cy="1015.4" r="1.8" fill="#1f70ff" stroke="#9cc0ff" stroke-width=".8"/>
<line x1="790.6" y1="999.7" x2="870.5" y2="1126.3" stroke="#1f70ff" stroke-width="2.2" stroke-linecap="butt" stroke-dasharray="6.5 5"/>
<polygon points="869.2,1124.2 859.4,1119.1 868.8,1113.2" fill="#1f70ff"/>
<circle cx="870.5" cy="1126.3" r="1.8" fill="#1f70ff" stroke="#9cc0ff" stroke-width=".8"/>
<line x1="798.1" y1="1067.4" x2="901.3" y2="1015.4" stroke="#1f70ff" stroke-width="2.2" stroke-linecap="butt" stroke-dasharray="6.5 5"/>
<polygon points="899.1,1016.5 893.1,1025.8 888.1,1015.8" fill="#1f70ff"/>
<circle cx="901.3" cy="1015.4" r="1.8" fill="#1f70ff" stroke="#9cc0ff" stroke-width=".8"/>
<line x1="830.3" y1="1275.4" x2="901.3" y2="1015.4" stroke="#1f70ff" stroke-width="2.2" stroke-linecap="butt" stroke-dasharray="6.5 5"/>
<polygon points="900.6,1017.8 903.5,1028.5 892.7,1025.5" fill="#1f70ff"/>
<circle cx="901.3" cy="1015.4" r="1.8" fill="#1f70ff" stroke="#9cc0ff" stroke-width=".8"/>
<line x1="813.3" y1="1179.5" x2="1013.0" y2="1046.9" stroke="#1f70ff" stroke-width="2.2" stroke-linecap="butt" stroke-dasharray="6.5 5"/>
<polygon points="1010.9,1048.3 1006.1,1058.2 999.9,1048.9" fill="#1f70ff"/>
<circle cx="1013" cy="1046.9" r="1.8" fill="#1f70ff" stroke="#9cc0ff" stroke-width=".8"/>
<line x1="819.6" y1="1192.4" x2="981.9" y2="1158.0" stroke="#1f70ff" stroke-width="2.2" stroke-linecap="butt" stroke-dasharray="6.5 5"/>
<polygon points="979.5,1158.5 971.3,1166.0 969.0,1155.0" fill="#1f70ff"/>
<circle cx="981.9" cy="1158" r="1.8" fill="#1f70ff" stroke="#9cc0ff" stroke-width=".8"/>
<line x1="1213.3" y1="507.3" x2="1298.3" y2="806.3" stroke="#1f70ff" stroke-width="2.2" stroke-linecap="butt" stroke-dasharray="6.5 5"/>
<polygon points="1297.6,803.9 1289.6,796.3 1300.4,793.2" fill="#1f70ff"/>
<circle cx="1298.3" cy="806.3" r="1.8" fill="#1f70ff" stroke="#9cc0ff" stroke-width=".8"/>
<line x1="1004.1" y1="619.9" x2="1297.9" y2="967.4" stroke="#1f70ff" stroke-width="2.2" stroke-linecap="butt" stroke-dasharray="6.5 5"/>
<polygon points="1296.3,965.5 1285.9,961.9 1294.4,954.6" fill="#1f70ff"/>
<circle cx="1297.9" cy="967.4" r="1.8" fill="#1f70ff" stroke="#9cc0ff" stroke-width=".8"/>
<line x1="1577.7" y1="502.7" x2="1441.0" y2="804.6" stroke="#1f70ff" stroke-width="2.2" stroke-linecap="butt" stroke-dasharray="6.5 5"/>
<polygon points="1450.6,798.3 1442.4,794.2 1442.4,802.4" fill="#1f70ff"/>
<circle cx="1441" cy="804.6" r="1.8" fill="#1f70ff" stroke="#9cc0ff" stroke-width=".8"/>
<line x1="1898.9" y1="841.0" x2="1581.6" y2="969.8" stroke="#1f70ff" stroke-width="2.2" stroke-linecap="butt" stroke-dasharray="6.5 5"/>
<polygon points="1583.9,968.9 1590.6,960.1 1594.8,970.5" fill="#1f70ff"/>
<circle cx="1581.6" cy="969.8" r="1.8" fill="#1f70ff" stroke="#9cc0ff" stroke-width=".8"/>
<circle cx="977.5" cy="891" r="4.8" fill="#f5141e"/>
<line x1="873.3" y1="774.7" x2="977.5" y2="891.0" stroke="#2fae80" stroke-width="2.2" stroke-linecap="butt" stroke-dasharray="3.5 5"/>
<line x1="977.5" y1="891.0" x2="1155.4" y2="965.8" stroke="#2fae80" stroke-width="2.2" stroke-linecap="butt" stroke-dasharray="3.5 5"/>
<circle cx="1155.4" cy="965.8" r="2" fill="#2fae80"/>
<circle cx="1545.6" cy="636.5" r="4.8" fill="#f5141e"/>
<line x1="1583.3" y1="505.2" x2="1545.6" y2="636.5" stroke="#2fae80" stroke-width="2.2" stroke-linecap="butt" stroke-dasharray="3.5 5"/>
<line x1="1545.6" y1="636.5" x2="1582.9" y2="805.9" stroke="#2fae80" stroke-width="2.2" stroke-linecap="butt" stroke-dasharray="3.5 5"/>
<circle cx="1582.9" cy="805.9" r="2" fill="#2fae80"/>
<circle cx="1036.3" cy="1281.2" r="4.8" fill="#f5141e"/>
<line x1="858.3" y1="1305.7" x2="1036.3" y2="1281.2" stroke="#2fae80" stroke-width="2.2" stroke-linecap="butt" stroke-dasharray="3.5 5"/>
<line x1="1036.3" y1="1281.2" x2="1224.3" y2="1171.4" stroke="#2fae80" stroke-width="2.2" stroke-linecap="butt" stroke-dasharray="3.5 5"/>
<circle cx="1224.3" cy="1171.4" r="2" fill="#2fae80"/>
<circle cx="1085.4" cy="1334.4" r="4.8" fill="#f5141e"/>
<line x1="926.5" y1="1413.8" x2="1085.4" y2="1334.4" stroke="#2fae80" stroke-width="2.2" stroke-linecap="butt" stroke-dasharray="3.5 5"/>
<line x1="1085.4" y1="1334.4" x2="1224.3" y2="1171.4" stroke="#2fae80" stroke-width="2.2" stroke-linecap="butt" stroke-dasharray="3.5 5"/>
<circle cx="1224.3" cy="1171.4" r="2" fill="#2fae80"/>
<line x1="1728.9" y1="609.0" x2="1440.3" y2="886.8" stroke="#22c55e" stroke-width="2.4" stroke-linecap="butt" stroke-dasharray="4.2 2.6"/>
<circle cx="1440.3" cy="886.8" r="2.2" fill="#22c55e"/>
<line x1="1748.0" y1="620.3" x2="1650.8" y2="1093.4" stroke="#9b5a2e" stroke-width="1.5" stroke-linecap="butt" stroke-dasharray="4 3"/>
<circle cx="1650.8" cy="1093.4" r="1.6" fill="#9b5a2e"/>
<line x1="1864.1" y1="1344.5" x2="1578.6" y2="1216.0" stroke="#9b5a2e" stroke-width="1.5" stroke-linecap="butt" stroke-dasharray="4 3"/>
<circle cx="1578.6" cy="1216" r="1.6" fill="#9b5a2e"/>
<line x1="1868.4" y1="1338.1" x2="1649.8" y2="1175.6" stroke="#9b5a2e" stroke-width="1.5" stroke-linecap="butt" stroke-dasharray="4 3"/>
<circle cx="1649.8" cy="1175.6" r="1.6" fill="#9b5a2e"/>
<defs><linearGradient id="gc" x1="0" y1="0" x2="0" y2="1"><stop offset="0" stop-color="#79fbea"/><stop offset=".25" stop-color="#8ffbee"/><stop offset="1" stop-color="#ecfffd"/></linearGradient>
<linearGradient id="gg" x1="0" y1="0" x2="0" y2="1"><stop offset="0" stop-color="#a4fb12"/><stop offset=".25" stop-color="#b0fb30"/><stop offset="1" stop-color="#f1ffd2"/></linearGradient></defs>
<rect x="811.7" y="732.7" width="73.6" height="29.2" rx="4.5" fill="url(#gg)" stroke="#aaff22" stroke-width="1.4"/>
<text x="848.5" y="752.3" font-size="11.5" fill="#111" text-anchor="middle">GLY94:A</text>
<rect x="763.1" y="837.8" width="73.6" height="29.2" rx="4.5" fill="url(#gc)" stroke="#7cf3ea" stroke-width="1.4"/>
<text x="799.9" y="857.4" font-size="11.5" fill="#111" text-anchor="middle">SER58:A</text>
<rect x="734.1" y="953.7" width="73.6" height="29.2" rx="4.5" fill="url(#gc)" stroke="#7cf3ea" stroke-width="1.4"/>
<text x="770.9" y="973.3" font-size="11.5" fill="#111" text-anchor="middle">ASN14:A</text>
<rect x="728.7" y="1070.0" width="73.6" height="29.2" rx="4.5" fill="url(#gc)" stroke="#7cf3ea" stroke-width="1.4"/>
<text x="765.5" y="1089.6" font-size="11.5" fill="#111" text-anchor="middle">THR11:A</text>
<rect x="745.5" y="1186.1" width="73.6" height="29.2" rx="4.5" fill="url(#gc)" stroke="#7cf3ea" stroke-width="1.4"/>
<text x="782.3" y="1205.7" font-size="11.5" fill="#111" text-anchor="middle">THR15:A</text>
<rect x="784.1" y="1296.1" width="73.6" height="29.2" rx="4.5" fill="url(#gc)" stroke="#7cf3ea" stroke-width="1.4"/>
<text x="820.9" y="1315.7" font-size="11.5" fill="#111" text-anchor="middle">THR12:A</text>
<rect x="857.2" y="1416.2" width="73.6" height="29.2" rx="4.5" fill="url(#gg)" stroke="#aaff22" stroke-width="1.4"/>
<text x="894.0" y="1435.8" font-size="11.5" fill="#111" text-anchor="middle">GLY128:A</text>
<rect x="1166.4" y="457.3" width="73.6" height="29.2" rx="4.5" fill="url(#gc)" stroke="#7cf3ea" stroke-width="1.4"/>
<text x="1203.2" y="476.9" font-size="11.5" fill="#111" text-anchor="middle">CYS102:A</text>
<rect x="943.1" y="577.0" width="73.6" height="29.2" rx="4.5" fill="url(#gc)" stroke="#7cf3ea" stroke-width="1.4"/>
<text x="979.9" y="596.6" font-size="11.5" fill="#111" text-anchor="middle">THR59:A</text>
<rect x="1556.7" y="455.0" width="73.6" height="29.2" rx="4.5" fill="url(#gc)" stroke="#7cf3ea" stroke-width="1.4"/>
<text x="1593.5" y="474.6" font-size="11.5" fill="#111" text-anchor="middle">TYR100:A</text>
<rect x="1718.4" y="569.6" width="73.6" height="29.2" rx="4.5" fill="url(#gc)" stroke="#7cf3ea" stroke-width="1.4"/>
<text x="1755.2" y="589.2" font-size="11.5" fill="#111" text-anchor="middle">TYR98:A</text>
<rect x="1897.7" y="811.7" width="73.6" height="29.2" rx="4.5" fill="url(#gg)" stroke="#aaff22" stroke-width="1.4"/>
<text x="1934.5" y="831.3" font-size="11.5" fill="#111" text-anchor="middle">ALA61:A</text>
<rect x="1861.2" y="1345.2" width="73.6" height="29.2" rx="4.5" fill="url(#gg)" stroke="#aaff22" stroke-width="1.4"/>
<text x="1898.0" y="1364.8" font-size="11.5" fill="#111" text-anchor="middle">TRP60:A</text></svg>
<div class="b" style="left:596.0px;top:360.0px;width:188.5px;height:353.0px;background:#fff;border:1px solid #eceef1;border-radius:11px;box-shadow:0 3px 10px rgba(15,23,42,.10),0 1px 3px rgba(15,23,42,.06)"></div>
<span class="t" style="left:629.6px;top:373.4px;font-size:13.5px;line-height:13.5px;color:#1f2937;font-weight:700;letter-spacing:0.32px;">Amino Acid Types</span>
<div class="b" style="left:607.3px;top:398.9px;width:48.7px;height:22.0px;background:#f4493c;border-radius:3.5px"></div>
<span class="t" style="left:663.2px;top:405.1px;font-size:12.5px;line-height:12.5px;color:#4b5563;font-weight:400;letter-spacing:0.09px;">Negatively Charged</span>
<div class="b" style="left:607.3px;top:432.6px;width:48.7px;height:22.0px;background:#6b6bff;border-radius:3.5px"></div>
<span class="t" style="left:663.2px;top:438.8px;font-size:12.5px;line-height:12.5px;color:#4b5563;font-weight:400;letter-spacing:0.03px;">Positively Charged</span>
<div class="b" style="left:607.3px;top:466.3px;width:48.7px;height:22.0px;background:#8dfcec;border-radius:3.5px"></div>
<span class="t" style="left:663.2px;top:472.5px;font-size:12.5px;line-height:12.5px;color:#4b5563;font-weight:400;letter-spacing:0.20px;">Polar</span>
<div class="b" style="left:607.3px;top:500.0px;width:48.7px;height:22.0px;background:#b1ff30;border-radius:3.5px"></div>
<span class="t" style="left:663.2px;top:506.2px;font-size:12.5px;line-height:12.5px;color:#4b5563;font-weight:400;letter-spacing:0.29px;">Hydrophobic</span>
<div class="b" style="left:607.3px;top:533.7px;width:48.7px;height:22.0px;background:#a1a5a8;border-radius:3.5px"></div>
<span class="t" style="left:664.2px;top:539.9px;font-size:12.5px;line-height:12.5px;color:#4b5563;font-weight:400;letter-spacing:-0.15px;">Special</span>
<div class="b" style="left:608.4px;top:590.7px;width:163.6px;height:1.0px;background:#e5e7eb"></div>
<span class="t" style="left:608.4px;top:599.7px;font-size:10.5px;line-height:10.5px;color:#374151;font-weight:700;letter-spacing:-0.38px;">Arrows:</span>
<span class="t" style="left:608.4px;top:612.4px;font-size:10.5px;line-height:10.5px;color:#6b7280;font-weight:400;letter-spacing:0.04px;">Indicate donor → acceptor</span>
<span class="t" style="left:608.4px;top:624.7px;font-size:10.5px;line-height:10.5px;color:#6b7280;font-weight:400;letter-spacing:0.16px;">direction for hydrogen bonds</span>
<span class="t" style="left:608.4px;top:637.2px;font-size:10.5px;line-height:10.5px;color:#6b7280;font-weight:400;letter-spacing:0.09px;">and water bridges</span>
<div class="b" style="left:604.2px;top:661.0px;width:7.4px;height:7.4px;background:#f00;border-radius:50%"></div>
<span class="t" style="left:616.9px;top:659.1px;font-size:10.5px;line-height:10.5px;color:#374151;font-weight:700;letter-spacing:-0.37px;">Red circle:</span>
<span class="t" style="left:608.4px;top:671.8px;font-size:10.5px;line-height:10.5px;color:#6b7280;font-weight:400;letter-spacing:0.11px;">Water molecule in water bridges</span>
<div class="b" style="left:1817.0px;top:360.0px;width:210.0px;height:170.0px;background:#fff;border:1px solid #eceef1;border-radius:11px;box-shadow:0 3px 10px rgba(15,23,42,.10),0 1px 3px rgba(15,23,42,.06)"></div>
<span class="t" style="left:1862.0px;top:373.9px;font-size:13.5px;line-height:13.5px;color:#1f2937;font-weight:700;letter-spacing:0.60px;">Interaction Types</span>
<svg class="ic" style="left:1829.5px;top:407.1px;width:27px;height:6px" viewBox="0 0 27 6"><line x1="0" y1="3" x2="27" y2="3" stroke="#2b7fff" stroke-width="2.6"/></svg>
<span class="t" style="left:1864.2px;top:404.9px;font-size:12.5px;line-height:12.5px;color:#4b5563;font-weight:400;letter-spacing:0.12px;">Hydrogen Bond (14)</span>
<svg class="ic" style="left:1829.5px;top:434.4px;width:27px;height:6px" viewBox="0 0 27 6"><line x1="0" y1="3" x2="27" y2="3" stroke="#a0522d" stroke-width="2.6" stroke-dasharray="5 2.5"/></svg>
<span class="t" style="left:1864.2px;top:432.2px;font-size:12.5px;line-height:12.5px;color:#4b5563;font-weight:400;letter-spacing:0.18px;">Hydrophobic (3)</span>
<svg class="ic" style="left:1829.5px;top:461.7px;width:27px;height:6px" viewBox="0 0 27 6"><line x1="0" y1="3" x2="27" y2="3" stroke="#2ecc71" stroke-width="2.6" stroke-dasharray="5 2.5"/></svg>
<span class="t" style="left:1865.2px;top:459.5px;font-size:12.5px;line-height:12.5px;color:#4b5563;font-weight:400;letter-spacing:-0.23px;">π-Stacking (1)</span>
<svg class="ic" style="left:1829.5px;top:489.0px;width:27px;height:6px" viewBox="0 0 27 6"><line x1="0" y1="3" x2="27" y2="3" stroke="#16a765" stroke-width="2.6" stroke-dasharray="5 2.5"/></svg>
<span class="t" style="left:1865.2px;top:486.8px;font-size:12.5px;line-height:12.5px;color:#4b5563;font-weight:400;letter-spacing:0.10px;">Water Bridge (4)</span>
<div class="b" style="left:566.0px;top:330.0px;width:16.0px;height:16.0px;background:#2b7fff;border-radius:4px;box-shadow:0 0 0 4px #fff,0 3px 10px 3px rgba(0,0,0,.13)"></div>
<div class="b" style="left:1303.0px;top:330.0px;width:16.0px;height:16.0px;background:#2b7fff;border-radius:4px;box-shadow:0 0 0 4px #fff,0 3px 10px 3px rgba(0,0,0,.13)"></div>
<div class="b" style="left:2040.0px;top:330.0px;width:16.0px;height:16.0px;background:#2b7fff;border-radius:4px;box-shadow:0 0 0 4px #fff,0 3px 10px 3px rgba(0,0,0,.13)"></div>
<div class="b" style="left:566.0px;top:962.0px;width:16.0px;height:16.0px;background:#2b7fff;border-radius:4px;box-shadow:0 0 0 4px #fff,0 3px 10px 3px rgba(0,0,0,.13)"></div>
<div class="b" style="left:2040.0px;top:962.0px;width:16.0px;height:16.0px;background:#2b7fff;border-radius:4px;box-shadow:0 0 0 4px #fff,0 3px 10px 3px rgba(0,0,0,.13)"></div>
<div class="b" style="left:566.0px;top:1594.0px;width:16.0px;height:16.0px;background:#2b7fff;border-radius:4px;box-shadow:0 0 0 4px #fff,0 3px 10px 3px rgba(0,0,0,.13)"></div>
<div class="b" style="left:1303.0px;top:1594.0px;width:16.0px;height:16.0px;background:#2b7fff;border-radius:4px;box-shadow:0 0 0 4px #fff,0 3px 10px 3px rgba(0,0,0,.13)"></div>
<div class="b" style="left:2040.0px;top:1594.0px;width:16.0px;height:16.0px;background:#2b7fff;border-radius:4px;box-shadow:0 0 0 4px #fff,0 3px 10px 3px rgba(0,0,0,.13)"></div>
</figure>
</body></html>
